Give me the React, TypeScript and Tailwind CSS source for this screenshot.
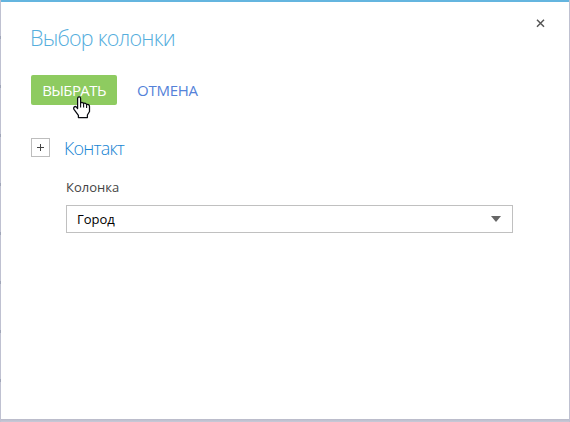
const font = "font-['Open_Sans','Noto_Sans',sans-serif]";

function HandCursor() {
  return (
    <svg className="absolute left-[42px] top-[21px] h-[24px] w-[18px]" viewBox="0 0 18 24">
      <path
        d="M4.6 12.5V2.4C4.6 .4 7.6 .4 7.6 2.4V7C8.6 6.1 10.4 6.4 10.6 7.6C11.6 6.9 13.4 7.2 13.6 8.6C14.8 8 16.5 8.6 16.5 10.4V15.5L14.4 19V21.5H5.4V19.3L1 13.4C0 11.5 1.8 9.8 3.3 10.9Z"
        fill="#fff"
        stroke="#080a10"
        strokeWidth="1.25"
        strokeLinejoin="round"
      />
      <path d="M7.6 7V11.5M10.6 7.6V11.5M13.6 8.6V12" stroke="#080a10" strokeWidth="1.1" />
    </svg>
  );
}

function Header() {
  return (
    <header className="flex h-[73px] items-start justify-between pl-[29px] pr-[24px]">
      <h1 className="mt-[19px] whitespace-nowrap text-[21.5px] font-light leading-[33px] tracking-[-0.78px] text-[#55aedd]">
        Выбор колонки
      </h1>
      <button type="button" aria-label="Закрыть" className="mt-[17px]">
        <svg width="9" height="9" viewBox="0 0 9 9" className="block">
          <path d="M1 .8L8 7.8M8 .8L1 7.8" stroke="#555" strokeWidth="1.5" />
        </svg>
      </button>
    </header>
  );
}

function PageEdge() {
  return (
    <div className="flex h-[422px] w-px flex-col gap-[46px] bg-[#bfc1d1] pt-[36px]">
      {[0, 1, 2, 3, 4, 5, 6, 7].map((row) => (
        <span key={row} className="block h-[3px] w-px shrink-0 bg-[#9fa5b8]" />
      ))}
    </div>
  );
}

export default function App() {
  return (
    <div className={`${font} flex h-[422px] w-[570px] overflow-hidden bg-[#bfc1d1] pr-px`}>
      <PageEdge />
      <div className="flex w-[568px] flex-col">
        <main className="flex h-[419px] flex-col border-t-2 border-[#64b5df] bg-white">
          <Header />
          <div className="ml-[30px] flex h-[30px] items-center">
            <div className="relative">
              <button
                type="button"
                className="block h-[30px] w-[86px] whitespace-nowrap rounded-[2px] bg-[#8ecb60] text-center text-[15px] leading-[30px] tracking-[-0.6px] text-white"
              >
                ВЫБРАТЬ
              </button>
              <HandCursor />
            </div>
            <button type="button" className="ml-5 whitespace-nowrap text-[15px] leading-[30px] tracking-[-0.25px] text-[#5482d9]">
              ОТМЕНА
            </button>
          </div>
          <div className="ml-[30px] mt-[33px] flex h-[19px] items-center">
            <button type="button" aria-label="Добавить" className="flex h-[19px] w-[19px] items-center justify-center border border-[#bdbdbd]">
              <svg width="7" height="7" viewBox="0 0 7 7">
                <path d="M3.5 0V7M0 3.5H7" stroke="#444" />
              </svg>
            </button>
            <h2 className="ml-[14px] whitespace-nowrap text-[18px] font-light leading-[24px] tracking-[-0.8px] text-[#1785d3]">Контакт</h2>
          </div>
          <div className="ml-[65px] mt-[20px] w-[447px]">
            <label className="block h-[28px] text-[13px] leading-[21px] text-[#444]">Колонка</label>
            <div className="flex h-[28px] items-center justify-between border border-[#c0c0c0] pl-[10px] pr-[11px] text-[13px] text-black">
              <span className="pt-px">Город</span>
              <svg width="10" height="6" viewBox="0 0 10 6">
                <path d="M0 0H10L5 6Z" fill="#666" />
              </svg>
            </div>
          </div>
        </main>
        <div className="h-[3px] bg-gradient-to-b from-[#b9bac9] to-[#c8cad8]" />
      </div>
    </div>
  );
}
